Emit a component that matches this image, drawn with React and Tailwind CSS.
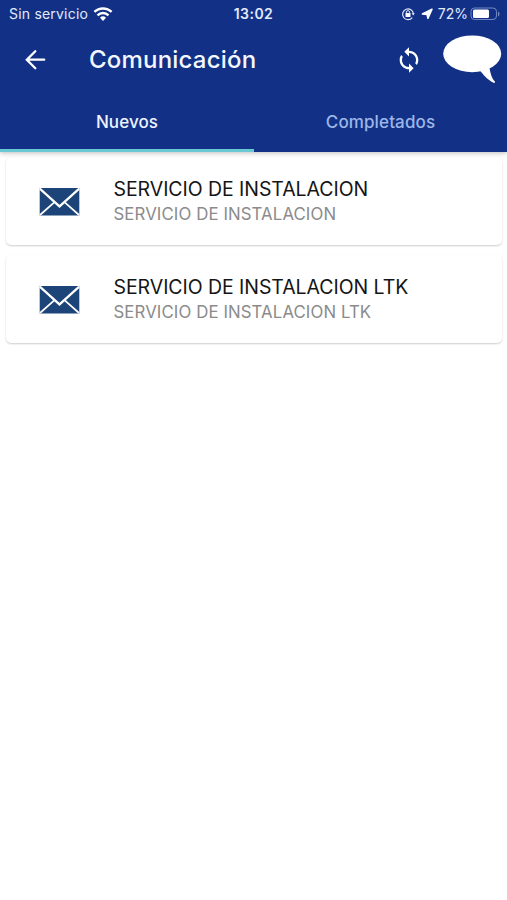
function WifiIcon() {
  return (
    <svg className="ml-[5px] h-[15px] w-[20px]" viewBox="0 0 20 15" fill="none" stroke="#fff" strokeWidth="2.5">
      <path d="M1.4 4.9A12.4 12.4 0 0 1 18.6 4.9" />
      <path d="M4.5 8.3A8 8 0 0 1 15.5 8.3" />
      <path d="M7 10.8a4.3 4.3 0 0 1 6 0L10 14Z" fill="#fff" stroke="none" />
    </svg>
  );
}

function StatusBar() {
  return (
    <div className="flex h-7 items-center text-[14px] leading-7 text-[#e2eafb]">
      <div className="flex flex-1 items-center pl-[9px]">
        <span className="tracking-[0.2px]">Sin servicio</span>
        <WifiIcon />
      </div>
      <span className="-ml-[3px] font-semibold tracking-[0.45px]">13:02</span>
      <div className="flex flex-1 items-center justify-end pr-[6px]">
        <svg className="h-[14px] w-[14px]" viewBox="0 0 14 14" fill="none" stroke="#dfe8fb" strokeWidth="1.2">
          <path d="M11.3 10.6A5.4 5.4 0 1 1 12.4 7" />
          <path d="M10.6 6.2h3.2l-1.6 2.2Z" fill="#dfe8fb" stroke="none" />
          <rect x="4.5" y="6" width="5" height="4" rx=".5" fill="#fff" stroke="none" />
          <path d="M5.4 6.4V5.2a1.6 1.6 0 0 1 3.2 0v1.2" strokeWidth="1" />
        </svg>
        <svg className="ml-[6px] h-[12px] w-[12px]" viewBox="0 0 12 12" fill="#fff">
          <path d="M11 1.2 6.9 10.4 6 6.4 1.4 6Z" stroke="#fff" strokeWidth="1.5" strokeLinejoin="round" />
        </svg>
        <span className="ml-[5px]">72%</span>
        <svg className="ml-[2px] h-[14px] w-[31px]" viewBox="0 0 31 14">
          <rect x="1" y="1" width="25.5" height="11.5" rx="3.5" fill="none" stroke="#7188be" />
          <rect x="3" y="2.5" width="16" height="8.5" rx="1.5" fill="#fff" />
          <path d="M28 4.5v5c2-.8 2-4.2 0-5Z" fill="#7188be" />
        </svg>
      </div>
    </div>
  );
}

function Toolbar() {
  return (
    <div className="flex h-16 items-center">
      <svg className="ml-[25px] h-[22px] w-[22px] shrink-0" viewBox="0 0 22 22" fill="none" stroke="#fff" strokeWidth="2.3" strokeLinecap="round">
        <path d="M19.2 10.7H2M10.3 2.2 1.8 10.7l8.5 8.5" />
      </svg>
      <h1 className="ml-[42px] flex-1 text-[24px] font-medium tracking-[0.2px] text-[#f3f7ff]">Comunicación</h1>
      <svg className="h-7 w-7" viewBox="0 0 24 24" fill="#fff">
        <path d="M12 4V1L8 5l4 4V6c3.31 0 6 2.69 6 6 0 1.01-.25 1.97-.7 2.8l1.46 1.46C19.54 15.03 20 13.57 20 12c0-4.42-3.58-8-8-8zm0 14c-3.31 0-6-2.69-6-6 0-1.01.25-1.97.7-2.8L5.24 7.74C4.46 8.97 4 10.43 4 12c0 4.42 3.58 8 8 8v3l4-4-4-4v3z" />
      </svg>
      <svg className="mr-[5px] ml-5 h-[50px] w-[59px]" viewBox="0 0 59 50" fill="#fff">
        <ellipse cx="29.2" cy="18.8" rx="29" ry="18.4" />
        <path d="M37 35.500C40 39 43 44 51 48c1.200-.3 1.300-1 .7-1.700C49 43.500 47.500 39 46.300 32Z" />
      </svg>
    </div>
  );
}

function Card({ title, subtitle }) {
  return (
    <li className="flex h-[88px] items-center rounded-[5px] bg-white shadow-[0_1px_2px_rgba(0,0,0,0.2)]">
      <svg className="mt-[2px] ml-[33px] h-[28px] w-[41px] shrink-0" viewBox="0 0 41 28">
        <rect x=".7" width="39.6" height="27.6" rx=".5" fill="#1d4478" />
        <path d="M.8.6 20.5 18.4 40.2.6" fill="none" stroke="#fff" strokeWidth="2.2" />
        <path d="M1 27 15.5 14.2M40 27 25.500 14.2" fill="none" stroke="#fff" strokeWidth="1.7" />
      </svg>
      <div className="ml-[33.5px]">
        <p className="text-[19.5px] leading-[26px] tracking-[-0.06px] text-[#151515]">{title}</p>
        <p className="text-[16.8px] leading-[25px] tracking-[0.1px] text-[#8b8b8b]">{subtitle}</p>
      </div>
    </li>
  );
}

export default function App() {
  return (
    <div className="h-[900px] w-[507px] overflow-hidden bg-white font-['Inter',sans-serif]">
      <header className="relative h-[152px] bg-[#123186] shadow-[0_1px_5px_rgba(0,0,0,0.27)]">
        <StatusBar />
        <Toolbar />
        <nav className="flex h-[60px] text-[17px] font-medium">
          <div className="flex w-[254px] items-center justify-center border-b-[3px] border-[#68c9d2] pt-[4px] text-[#edf3ff]">
            <span className="tracking-[0.1px]">Nuevos</span>
          </div>
          <div className="flex flex-1 items-center justify-center pt-px text-[#9db6e8]">
            <span className="tracking-[0.12px]">Completados</span>
          </div>
        </nav>
      </header>
      <ul className="flex flex-col gap-[10px] pt-[5px] pr-[5px] pl-[6px]">
        <Card title="SERVICIO DE INSTALACION" subtitle="SERVICIO DE INSTALACION" />
        <Card title="SERVICIO DE INSTALACION LTK" subtitle="SERVICIO DE INSTALACION LTK" />
      </ul>
    </div>
  );
}
